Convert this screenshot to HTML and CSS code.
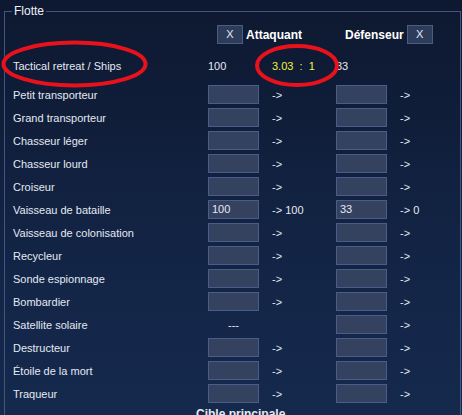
FILE: index.html
```html
<!DOCTYPE html>
<html lang="fr">
<head>
    <meta charset="UTF-8">
    <title>Flotte</title>
    <link rel="stylesheet" href="styles.css">
</head>
<body>
    <fieldset id="fleet">
        <legend>Flotte</legend>

        <div class="row head">
            <div class="side att"><span class="btn">X</span><b>Attaquant</b></div>
            <div class="side def"><b>Défenseur</b><span class="btn">X</span></div>
        </div>

        <div class="row ratio">
            <div class="label">Tactical retreat / Ships</div>
            <div>100</div>
            <div class="yellow">3.03 &nbsp;: &nbsp;1</div>
            <div>33</div>
            <div></div>
        </div>

        <div class="row"><div class="label">Petit transporteur</div><div><span class="box"></span></div><div>-&gt;</div><div><span class="box"></span></div><div>-&gt;</div></div>
        <div class="row"><div class="label">Grand transporteur</div><div><span class="box"></span></div><div>-&gt;</div><div><span class="box"></span></div><div>-&gt;</div></div>
        <div class="row"><div class="label">Chasseur léger</div><div><span class="box"></span></div><div>-&gt;</div><div><span class="box"></span></div><div>-&gt;</div></div>
        <div class="row"><div class="label">Chasseur lourd</div><div><span class="box"></span></div><div>-&gt;</div><div><span class="box"></span></div><div>-&gt;</div></div>
        <div class="row"><div class="label">Croiseur</div><div><span class="box"></span></div><div>-&gt;</div><div><span class="box"></span></div><div>-&gt;</div></div>
        <div class="row"><div class="label">Vaisseau de bataille</div><div><span class="box">100</span></div><div>-&gt; 100</div><div><span class="box">33</span></div><div>-&gt; 0</div></div>
        <div class="row"><div class="label">Vaisseau de colonisation</div><div><span class="box"></span></div><div>-&gt;</div><div><span class="box"></span></div><div>-&gt;</div></div>
        <div class="row"><div class="label">Recycleur</div><div><span class="box"></span></div><div>-&gt;</div><div><span class="box"></span></div><div>-&gt;</div></div>
        <div class="row"><div class="label">Sonde espionnage</div><div><span class="box"></span></div><div>-&gt;</div><div><span class="box"></span></div><div>-&gt;</div></div>
        <div class="row"><div class="label">Bombardier</div><div><span class="box"></span></div><div>-&gt;</div><div><span class="box"></span></div><div>-&gt;</div></div>
        <div class="row"><div class="label">Satellite solaire</div><div><span class="none">---</span></div><div></div><div><span class="box"></span></div><div>-&gt;</div></div>
        <div class="row"><div class="label">Destructeur</div><div><span class="box"></span></div><div>-&gt;</div><div><span class="box"></span></div><div>-&gt;</div></div>
        <div class="row"><div class="label">Étoile de la mort</div><div><span class="box"></span></div><div>-&gt;</div><div><span class="box"></span></div><div>-&gt;</div></div>
        <div class="row"><div class="label">Traqueur</div><div><span class="box"></span></div><div>-&gt;</div><div><span class="box"></span></div><div>-&gt;</div></div>

        <div class="target"><b>Cible principale</b></div>
    </fieldset>

    <!-- annotations rouges -->
    <svg class="marks" width="462" height="415" viewBox="0 0 462 415">
        <ellipse cx="74.5" cy="64" rx="71" ry="21.5" fill="none" stroke="#e8121c" stroke-width="4"/>
        <ellipse cx="297" cy="65.5" rx="40" ry="19.5" fill="none" stroke="#e8121c" stroke-width="4"/>
    </svg>
</body>
</html>
```

FILE: styles.css
```css
html,
body {
    margin: 0;
    height: 100%;
    overflow: hidden;
}

body {
    background: linear-gradient(#0e1830, #132648 70%, #15294d);
    color: #e4e9f3;
    font-family: "Liberation Sans", Arial, sans-serif;
    font-size: 11px;
    position: relative;
}

#fleet {
    margin: 4px 1px 0 4px;
    padding: 7px 0 0 8px;
    border: 1px solid #42577f;
    border-bottom: none;
    min-width: 0;
}

#fleet legend {
    padding: 0 2px;
    margin-left: -1px;
    line-height: 14px;
    font-size: 12px;
    color: #eef2fa;
}

.row {
    display: grid;
    grid-template-columns: 195px 64px 64px 64px 1fr;
    align-items: center;
    height: 19px;
    margin-bottom: 4px;
    white-space: nowrap;
}

.row.head {
    grid-template-columns: 195px 128px 1fr;
    margin-bottom: 12px;
    font-size: 12px;
}

.row.ratio {
    margin-bottom: 10px;
}

.side {
    grid-column: 2;
    display: flex;
    align-items: center;
    gap: 3px;
    padding-left: 9px;
}

.side.def {
    grid-column: 3;
}

.btn {
    display: inline-block;
    width: 24px;
    height: 17px;
    line-height: 17px;
    text-align: center;
    background: #2e3c5c;
    border: 1px solid #4b5c82;
    color: #e4e9f3;
    font-size: 11px;
}

.side b {
    color: #ffffff;
}

.yellow {
    color: #f2f23a;
}

.box {
    display: block;
    box-sizing: border-box;
    width: 51px;
    height: 19px;
    line-height: 17px;
    padding-left: 3px;
    background: #344260;
    border: 1px solid #4a5d88;
}

.none {
    display: block;
    width: 51px;
    text-align: center;
}

.target {
    padding-left: 183px;
    margin-top: 3px;
    font-size: 12px;
}

.marks {
    position: absolute;
    left: 0;
    top: 0;
}
```
